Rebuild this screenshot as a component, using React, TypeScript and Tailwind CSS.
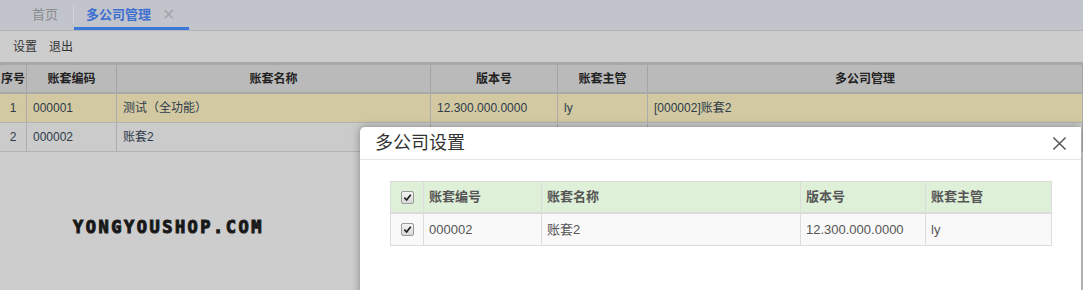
export default function App() {
  const cols = [
    { title: "序号", w: "w-[27px]" },
    { title: "账套编码", w: "w-[90px]" },
    { title: "账套名称", w: "w-[314px]" },
    { title: "版本号", w: "w-[127px]" },
    { title: "账套主管", w: "w-[90px]" },
    { title: "多公司管理", w: "flex-1" },
  ];

  const rows = [
    ["1", "000001", "测试（全功能）", "12.300.000.0000", "ly", "[000002]账套2"],
    ["2", "000002", "账套2", "", "", ""],
  ];

  const dlgCols = [
    { title: "账套编号", w: "w-[118px]" },
    { title: "账套名称", w: "w-[259px]" },
    { title: "版本号", w: "w-[125px]" },
    { title: "账套主管", w: "flex-1" },
  ];

  const Check = () => (
    <span className="flex h-[13px] w-[13px] items-center justify-center rounded-[2px] border border-[#9a9a9a] bg-gradient-to-b from-[#f4f4f4] to-[#d8d8d8]">
      <svg viewBox="0 0 10 10" className="h-[9px] w-[9px]">
        <path d="M1.5 5.2 L4 7.8 L8.6 2" fill="none" stroke="#222" strokeWidth={1.9} />
      </svg>
    </span>
  );

  return (
    <div
      className="relative h-[290px] w-[1083px] overflow-hidden bg-[#cdcdcd] text-[12px] text-[#333]"
      style={{ fontFamily: '"Liberation Sans", "Noto Sans CJK SC", sans-serif' }}
    >
      {/* Tab bar */}
      <div className="flex h-[31px] items-stretch border-b border-[#b3b5bb] bg-[#c1c4cb]">
        <div className="flex w-[73px] items-center pl-[32px] text-[13px] text-[#8a8c90]">首页</div>
        <div className="my-[6px] w-px bg-[#d2d4d9]" />
        <div className="relative flex w-[115px] items-center pl-[12px] text-[13px] font-bold text-[#3d6fd1]">
          多公司管理
          <span className="ml-[11px] text-[16px] font-normal text-[#a4a6ab]">✕</span>
          <div className="absolute bottom-0 left-0 right-0 h-[3px] bg-[#3a77d6]" />
        </div>
      </div>

      {/* Toolbar */}
      <div className="flex h-[31px] items-center gap-[12px] pl-[13px] text-[12px] text-[#333]">
        <span>设置</span>
        <span>退出</span>
      </div>

      {/* Grid */}
      <div className="border-t-[3px] border-[#a9a9a9]">
        <div className="flex h-[29px] border-b-2 border-[#a8a8a8] bg-[#bababa] font-bold text-[#222]">
          {cols.map((c, i) => (
            <div
              key={i}
              className={`${c.w} flex items-center justify-center border-r border-[#a4a4a4] ${i === 0 ? "justify-start pl-px" : ""}`}
            >
              {c.title}
            </div>
          ))}
        </div>
        {rows.map((r, ri) => (
          <div
            key={ri}
            className={`flex h-[29px] border-b border-[#b3b3b3] ${ri === 0 ? "bg-[#d2c9a2]" : "bg-[#cbcbcb]"}`}
          >
            {cols.map((c, i) => (
              <div
                key={i}
                className={`${c.w} flex items-center border-r border-[#adadad] text-[#2e3b4a] ${i === 0 ? "justify-center" : "pl-[6px]"}`}
              >
                {r[i]}
              </div>
            ))}
          </div>
        ))}
      </div>

      {/* Watermark */}
      <div
        className="absolute left-[73px] top-[215px] text-[17px] font-bold tracking-[2.5px] text-[#111]"
        style={{ fontFamily: '"DejaVu Sans Mono", monospace', WebkitTextStroke: "1.1px #222" }}
      >
        YONGYOUSHOP.COM
      </div>

      {/* Dialog */}
      <div className="absolute left-[360px] top-[127px] h-[200px] w-[721px] rounded-tl-[5px] bg-white shadow-[0_0_8px_rgba(0,0,0,0.35)]">
        <div className="flex h-[33px] items-center justify-between border-b border-[#e5e5e5] pl-[15px] pr-[14px]">
          <span className="text-[18px] text-[#333]">多公司设置</span>
          <svg viewBox="0 0 16 16" className="h-[15px] w-[15px]">
            <path d="M1.5 1.5 L14.5 14.5 M14.5 1.5 L1.5 14.5" stroke="#555" strokeWidth={1.6} />
          </svg>
        </div>

        <div className="ml-[30px] mt-[21px] w-[662px] border border-[#dcdcdc] text-[13px] text-[#555]">
          <div className="flex h-[32px] border-b-2 border-[#dcdcdc] bg-[#dff0d8] font-bold">
            <div className="flex w-[33px] items-center justify-center border-r border-[#dcdcdc]">
              <Check />
            </div>
            {dlgCols.map((c, i) => (
              <div key={i} className={`${c.w} flex items-center border-r border-[#dcdcdc] pl-[5px] last:border-r-0`}>
                {c.title}
              </div>
            ))}
          </div>
          <div className="flex h-[31px] bg-[#f9f9f9]">
            <div className="flex w-[33px] items-start justify-center border-r border-[#dcdcdc] pt-[9px]">
              <Check />
            </div>
            {["000002", "账套2", "12.300.000.0000", "ly"].map((t, i) => (
              <div key={i} className={`${dlgCols[i].w} border-r border-[#dcdcdc] pl-[5px] pt-[6px] last:border-r-0`}>
                {t}
              </div>
            ))}
          </div>
        </div>
      </div>
    </div>
  );
}
